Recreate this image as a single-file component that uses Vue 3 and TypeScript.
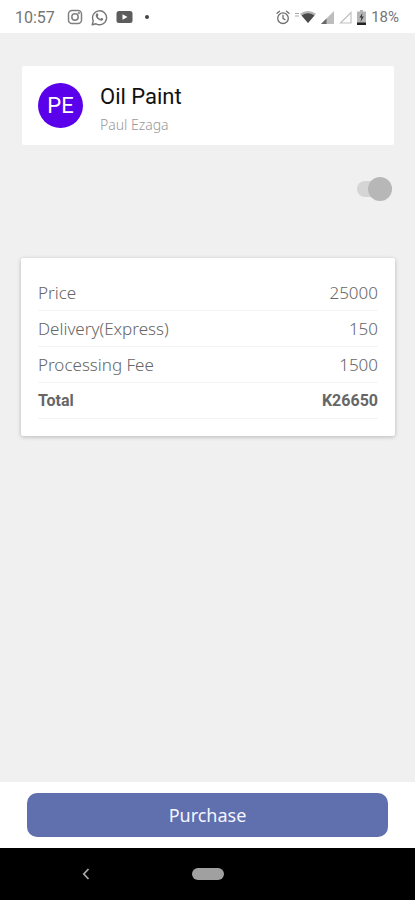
<script setup lang="ts">
import { ref } from 'vue'

interface Charge {
  label: string
  amount: string
  total?: boolean
}

const charges: Charge[] = [
  { label: 'Price', amount: '25000' },
  { label: 'Delivery(Express)', amount: '150' },
  { label: 'Processing Fee', amount: '1500' },
  { label: 'Total', amount: 'K26650', total: true },
]

const enabled = ref(true)
</script>

<template>
  <div class="screen">
    <header class="status">
      <div class="status-group left">
        <span class="time">10:57</span>
        <svg width="16" height="16" viewBox="0 0 16 16" fill="none" stroke="#808080" stroke-width="1.5">
          <rect x="1.5" y="1.5" width="13" height="13" rx="3.5" />
          <circle cx="8" cy="8" r="3.2" />
          <circle cx="11.8" cy="4.2" r=".4" />
        </svg>
        <svg width="17" height="17" viewBox="0 0 17 17">
          <path d="M1.2 15.8l1.1-3.9A7 7 0 1 1 5 14.8z" fill="none" stroke="#777" stroke-width="1.4" stroke-linejoin="round" />
          <path d="M5.6 4.6c.5-.4 1-.3 1.2.1l.6 1.4c.1.4-.6 1-.6 1.3.4 1 1.4 1.9 2.5 2.3.3 0 .8-.9 1.2-.8l1.5.7c.4.2.3.9-.1 1.4-.8.9-2 .8-3.2.3-1.9-.8-3.300-2.300-3.900-4.100-.3-1 0-2 .8-2.600z" fill="#777" />
        </svg>
        <svg width="17" height="14" viewBox="0 0 17 14">
          <rect x=".5" y="1" width="16" height="12" rx="2.5" fill="#5c5c5c" />
          <path d="M6.5 4.2l5 2.800-5 2.800z" fill="#fff" />
        </svg>
        <span class="dot"></span>
      </div>
      <div class="status-group right">
        <svg width="14" height="15" viewBox="0 0 14 15" fill="none" stroke="#6f6f6f" stroke-width="1.3" stroke-linecap="round">
          <circle cx="7" cy="8.2" r="5.3" />
          <path d="M7 5.2v3.2l2 1.3M1 3.300l2.500-2M13 3.300l-2.500-2" />
        </svg>
        <svg width="21" height="14" viewBox="0 0 21 14">
          <path d="M0 3.500h4M0 6h4" stroke="#aaa" stroke-width="1.2" />
          <path d="M5 3.800a13 13 0 0 1 16 0L13 13z" fill="#b5b5b5" />
          <path d="M6.600 5.600a11 11 0 0 1 12.800 0L13 13z" fill="#4a4a4a" />
        </svg>
        <svg width="13" height="13" viewBox="0 0 13 13">
          <path d="M13 0v13H0z" fill="#bdbdbd" />
          <path d="M5.5 7.5V13H0z" fill="#666" />
        </svg>
        <svg width="13" height="13" viewBox="0 0 13 13">
          <path d="M12 1.5V12H1.5z" fill="none" stroke="#c2c2c2" stroke-width="1.2" />
        </svg>
        <svg width="9" height="15" viewBox="0 0 9 15">
          <path d="M3 0h3v1.500h3V15H0V1.500h3z" fill="#b5b5b5" />
          <path d="M0 12.5h9V15H0z" fill="#222" />
          <path d="M5.5 3L2.500 7.500h2L3.500 12l3.300-5.500h-2z" fill="#333" />
        </svg>
        <span class="battery">18%</span>
      </div>
    </header>

    <main class="content">
      <section class="card product">
        <div class="avatar">PE</div>
        <div class="product-text">
          <h1>Oil Paint</h1>
          <p>Paul Ezaga</p>
        </div>
      </section>

      <div class="option">
        <input v-model="enabled" class="switch" type="checkbox" role="switch" aria-label="Express delivery" />
      </div>

      <section class="card summary">
        <table>
          <tbody>
            <tr v-for="charge in charges" :key="charge.label" :class="{ total: charge.total }">
              <th scope="row">{{ charge.label }}</th>
              <td>{{ charge.amount }}</td>
            </tr>
          </tbody>
        </table>
      </section>
    </main>

    <footer class="action">
      <button class="purchase" type="button">Purchase</button>
    </footer>

    <nav class="system">
      <button class="back" type="button" aria-label="Back">
        <svg width="8" height="12" viewBox="0 0 8 12" fill="none" stroke="#a8a8a8" stroke-width="1.8">
          <path d="M6.5 1L1.8 6l4.7 5" />
        </svg>
      </button>
      <button class="home" type="button" aria-label="Home"></button>
    </nav>
  </div>
</template>

<style>
body {
  margin: 0;
  background: #f0f0f0;
}
</style>

<style scoped>
.screen {
  display: flex;
  flex-direction: column;
  min-height: 100vh;
  background: #f0f0f0;
  font-family: Roboto, "Liberation Sans", sans-serif;
}

.status {
  display: flex;
  justify-content: space-between;
  height: 33px;
  padding: 0 16px 0 15px;
  background: #fff;
  color: #757575;
  font-size: 15px;
}

.status-group {
  display: flex;
  align-items: center;
  height: 34px;
}

.left {
  gap: 8px;
}

.right {
  gap: 5px;
}

.time {
  margin-right: 4px;
  font-size: 16px;
}

.dot {
  width: 4px;
  height: 4px;
  margin-left: 4px;
  border-radius: 50%;
  background: #444;
}

.content {
  flex: 1;
  padding: 33px 20px 0 21px;
}

.card {
  background: #fff;
}

.product {
  display: flex;
  align-items: center;
  gap: 17px;
  min-height: 79px;
  margin: 0 1px;
  padding: 0 16px;
  border-radius: 2px;
}

.avatar {
  display: flex;
  align-items: center;
  justify-content: center;
  width: 45px;
  height: 45px;
  border-radius: 50%;
  background: #5b00ea;
  color: #fff;
  font-size: 22px;
}

.product-text {
  padding-top: 6px;
}

.product-text h1 {
  margin: 0;
  color: #111;
  font-size: 22px;
  font-weight: 400;
  line-height: 28px;
}

.product-text p {
  margin: 4px 0 0;
  color: #999;
  font-family: "Noto Sans", sans-serif;
  font-size: 14px;
  font-weight: 300;
  line-height: 20px;
}

.option {
  display: flex;
  justify-content: flex-end;
  padding: 32px 3px 0 0;
}

.switch {
  appearance: none;
  display: grid;
  align-items: center;
  width: 35px;
  height: 24px;
  margin: 0;
  cursor: pointer;
}

.switch::before,
.switch::after {
  content: "";
  grid-area: 1 / 1;
}

.switch::before {
  height: 16px;
  border-radius: 8px;
  background: #d5d5d5;
}

.switch::after {
  justify-self: start;
  width: 24px;
  height: 24px;
  border-radius: 50%;
  background: #b7b7b7;
}

.switch:checked::after {
  justify-self: end;
}

.summary {
  margin-top: 57px;
  padding: 17px;
  border-radius: 2px;
  box-shadow: 0 1px 4px rgba(0, 0, 0, 0.24);
}

table {
  width: 100%;
  border-collapse: separate;
  border-spacing: 0;
  color: #666;
  font-family: "Noto Sans", sans-serif;
  font-size: 17px;
}

th,
td {
  height: 35px;
  padding: 0;
  border-bottom: 1px solid #f4f4f4;
  font-weight: 300;
  line-height: 24px;
}

th {
  text-align: left;
}

td {
  text-align: right;
}

.total th,
.total td {
  color: #666;
  font-family: Roboto, sans-serif;
  font-size: 16px;
  font-weight: 700;
}

.action {
  padding: 11px 27px;
  background: #fff;
}

.purchase {
  display: block;
  width: 100%;
  height: 44px;
  padding: 0;
  border: 0;
  border-radius: 10px;
  background: #606fae;
  color: #f4f6ff;
  font-family: "Noto Sans", sans-serif;
  font-size: 18px;
  cursor: pointer;
}

.system {
  display: grid;
  grid-template-columns: 1fr 32px 1fr;
  align-items: center;
  height: 52px;
  background: #000;
}

.system button {
  padding: 0;
  border: 0;
  background: none;
}

.system .back {
  display: flex;
  align-items: center;
  justify-content: center;
  width: 48px;
  height: 48px;
  margin-left: 62px;
}

.system .home {
  height: 12px;
  border-radius: 6px;
  background: #a0a0a0;
}
</style>
